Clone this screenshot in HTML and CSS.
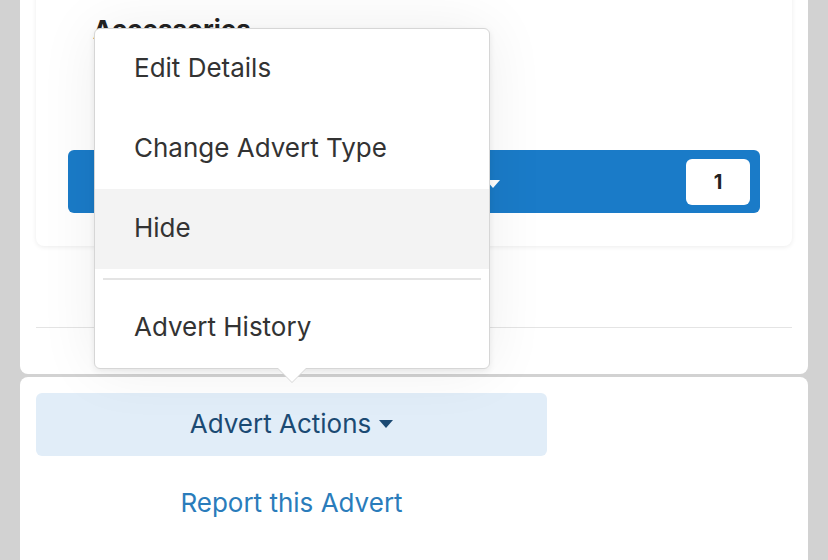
FILE: index.html
```html
<!DOCTYPE html>
<html>
<head>
<meta charset="utf-8">
<link rel="stylesheet" href="styles.css">
</head>
<body>
<div class="page">
  <div class="panel panel-top">
    <div class="card">
      <div class="card-title">Accessories</div>
      <div class="bar">
        <span class="bar-label">Quantity <span class="caret caret-white"></span></span>
        <span class="badge">1</span>
      </div>
    </div>
    <div class="rule"></div>
  </div>
  <div class="panel panel-bottom">
    <div class="actions-btn">Advert Actions <span class="caret caret-dark"></span></div>
    <a class="report-link" href="#">Report this Advert</a>
  </div>

  <div class="menu">
    <div class="menu-item">Edit Details</div>
    <div class="menu-item">Change Advert Type</div>
    <div class="menu-item is-active">Hide</div>
    <div class="menu-sep"></div>
    <div class="menu-item">Advert History</div>
  </div>
</div>
</body>
</html>
```

FILE: styles.css
```css
html, body {
  margin: 0;
  padding: 0;
}
body {
  width: 828px;
  height: 560px;
  overflow: hidden;
  background: #d2d2d2;
  font-family: Inter, "Liberation Sans", sans-serif;
}
.page {
  position: relative;
  margin: 0 20px;
  display: flex;
  flex-direction: column;
  gap: 3px;
}
.panel {
  background: #fff;
  padding: 0 16px;
}
.panel-top {
  border-radius: 0 0 8px 8px;
  padding-bottom: 46px;
}
.panel-bottom {
  border-radius: 8px 8px 0 0;
  height: 183px;
  box-sizing: border-box;
  padding-top: 16px;
  display: flex;
  flex-direction: column;
}
.card {
  margin-top: -30px;
  background: #fff;
  border-radius: 8px;
  box-shadow: 0 1px 5px rgba(0, 0, 0, 0.08);
  padding: 44px 32px 33px;
}
.card-title {
  font-size: 26px;
  font-weight: 700;
  line-height: 32px;
  color: #222;
  padding-left: 25px;
}
.bar {
  margin-top: 104px;
  height: 63px;
  box-sizing: border-box;
  background: #1a7bc8;
  border-radius: 6px;
  display: flex;
  align-items: center;
  padding: 0 10px 0 0;
}
.bar-label {
  width: 432px;
  text-align: right;
  color: #fff;
  font-size: 22px;
  font-weight: 600;
}
.badge {
  margin-left: auto;
  width: 64px;
  height: 46px;
  background: #fff;
  border-radius: 6px;
  display: flex;
  align-items: center;
  justify-content: center;
  font-size: 20px;
  font-weight: 700;
  color: #222;
}
.caret {
  display: inline-block;
  width: 0;
  height: 0;
  border-left: 7px solid transparent;
  border-right: 7px solid transparent;
  vertical-align: middle;
  margin-left: 2px;
}
.caret-white {
  border-top: 8px solid #fff;
}
.caret-dark {
  border-top: 8px solid #1b4a73;
}
.rule {
  margin-top: 81px;
  height: 1px;
  background: #e4e4e4;
}
.actions-btn {
  width: 511px;
  height: 63px;
  background: #e1edf8;
  border-radius: 6px;
  display: flex;
  align-items: center;
  justify-content: center;
  gap: 6px;
  font-size: 26px;
  color: #1b4a73;
  padding-bottom: 2px;
  box-sizing: border-box;
}
.report-link {
  width: 511px;
  margin-top: 31px;
  line-height: 32px;
  text-align: center;
  font-size: 26px;
  color: #2a7cbb;
  text-decoration: none;
}
.menu {
  position: absolute;
  left: 74px;
  top: 28px;
  width: 396px;
  box-sizing: border-box;
  background: #fff;
  border: 1px solid #d6d6d6;
  border-radius: 6px;
  box-shadow: 0 2px 6px rgba(0, 0, 0, 0.08), 0 0 60px rgba(0, 0, 0, 0.07);
  font-size: 26px;
  color: #333;
}
.menu::after {
  content: "";
  position: absolute;
  left: 183px;
  bottom: -14px;
  width: 0;
  height: 0;
  border-left: 14px solid transparent;
  border-right: 14px solid transparent;
  border-top: 14px solid #fff;
  filter: drop-shadow(0 1px 0 #d6d6d6);
}
.menu-item {
  height: 80px;
  box-sizing: border-box;
  display: flex;
  align-items: center;
  padding-left: 39px;
  padding-bottom: 4px;
}
.menu-item.is-active {
  background: #f3f3f3;
}
.menu-sep {
  margin: 9px 8px 8px;
  height: 2px;
  background: #e4e4e4;
}
```
